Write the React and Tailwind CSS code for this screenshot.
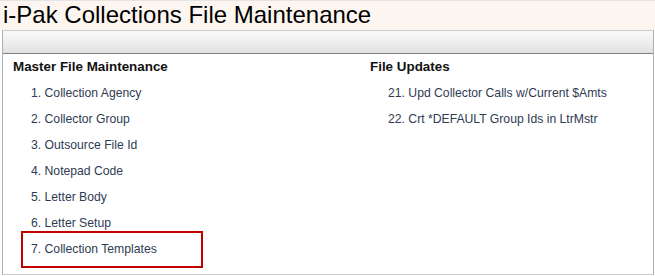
export default function App() {
  const left = [
    "1. Collection Agency",
    "2. Collector Group",
    "3. Outsource File Id",
    "4. Notepad Code",
    "5. Letter Body",
    "6. Letter Setup",
  ];
  const right = [
    "21. Upd Collector Calls w/Current $Amts",
    "22. Crt *DEFAULT Group Ids in LtrMstr",
  ];
  return (
    <div className="w-[655px] h-[276px] bg-white font-['Liberation_Sans',Arial,sans-serif] overflow-hidden">
      <div className="h-[30px] bg-[#fdf6f0] border-t border-[#e4e4e4] pl-[3px] text-[24px] leading-[28px] text-black">
        i-Pak Collections File Maintenance
      </div>
      <div className="ml-[2px] mr-px border-l border-r border-[#b0b0b0]">
        <div className="h-[24px] border-t border-b border-t-[#cccccc] border-b-[#808080] bg-gradient-to-b from-[#fbfbfb] to-[#e1e1e1]" />
        <div className="h-[221px] border-b border-[#cccccc] flex pt-[5px]">
          <div className="w-[367px] pl-[10px]">
            <div className="text-[13.4px] leading-[16px] font-bold text-[#111]">Master File Maintenance</div>
            <div className="flex flex-col pl-[18px] mt-[5px] text-[12.2px] text-[#2f3b52]">
              {left.map((t) => (
                <div key={t} className="h-[26px] leading-[26px]">{t}</div>
              ))}
              <div className="-mt-[5.5px] -ml-[10px] w-[182px] h-[37px] border-2 border-[#c00000] pl-[8px] leading-[33px]">
                7. Collection Templates
              </div>
            </div>
          </div>
          <div className="flex-1">
            <div className="text-[13.4px] leading-[16px] font-bold text-[#111]">File Updates</div>
            <div className="flex flex-col pl-[18px] mt-[5px] text-[12.2px] text-[#2f3b52]">
              {right.map((t) => (
                <div key={t} className="h-[26px] leading-[26px]">{t}</div>
              ))}
            </div>
          </div>
        </div>
      </div>
    </div>
  );
}
